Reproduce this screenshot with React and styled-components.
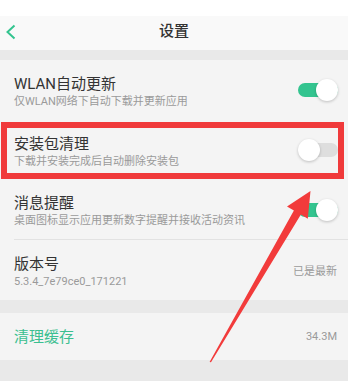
import React from "react";
import styled, { createGlobalStyle } from "styled-components";

const Global = createGlobalStyle`
  html, body { margin: 0; padding: 0; background: #e9e9e9; }
  body { font-family: Roboto, "Noto Sans CJK SC", sans-serif; }
  * { box-sizing: border-box; }
`;

const Page = styled.div`
  position: relative;
  width: 348px;
  height: 381px;
  overflow: hidden;
  background: #e9e9e9;
  display: flex;
  flex-direction: column;
`;

const StatusArea = styled.div`
  height: 16px;
  background: #ffffff;
`;

const Header = styled.div`
  height: 34px;
  background: #f9f9f9;
  display: grid;
  grid-template-columns: 40px 1fr 40px;
  align-items: center;
`;

const Back = styled.div`
  display: flex;
  align-items: center;
  padding-left: 5px;
  padding-bottom: 2px;
`;

const Title = styled.div`
  text-align: center;
  font-size: 15px;
  color: #333;
  font-weight: 500;
  line-height: 20px;
  padding-bottom: 4px;
`;

const Gap = styled.div`
  height: ${(p) => p.$h}px;
  background: #e9e9e9;
`;

const Group = styled.div`
  background: #f4f4f4;
`;

const Row = styled.div`
  height: ${(p) => p.$h || 60}px;
  margin-left: 14px;
  padding-right: 11px;
  display: flex;
  align-items: center;
  justify-content: space-between;
  border-bottom: ${(p) => (p.$divider ? "1px solid #e2e2e2" : "none")};
`;

const Texts = styled.div`
  display: flex;
  flex-direction: column;
  padding-top: ${(p) => (p.$single ? 0 : 2)}px;
`;

const RowTitle = styled.div`
  font-size: 15px;
  line-height: 20px;
  color: ${(p) => (p.$accent ? "#3bbf90" : "#333")};
`;

const RowSub = styled.div`
  font-size: 11px;
  line-height: 14px;
  color: #9a9a9a;
  margin-top: 1px;
`;

const Value = styled.div`
  font-size: 11px;
  color: #9a9a9a;
`;

const Switch = styled.div`
  position: relative;
  width: 40px;
  height: 22px;
  margin-right: -1px;
`;

const Track = styled.div`
  position: absolute;
  left: 0;
  right: 0;
  top: 4px;
  height: 14px;
  border-radius: 7px;
  background: ${(p) => (p.$on ? "#33c48f" : "#dedede")};
`;

const Knob = styled.div`
  position: absolute;
  top: 0;
  left: ${(p) => (p.$on ? 18 : 0)}px;
  width: 22px;
  height: 22px;
  border-radius: 50%;
  background: #fff;
  box-shadow: 0 1px 3px rgba(0, 0, 0, 0.22);
`;

const Highlight = styled.div`
  position: absolute;
  left: 1px;
  top: 122px;
  width: 343px;
  height: 57px;
  border: 6px solid #f03a3b;
  pointer-events: none;
`;

const ArrowLayer = styled.svg`
  position: absolute;
  left: 0;
  top: 0;
  pointer-events: none;
`;

function Toggle({ on }) {
  return (
    <Switch>
      <Track $on={on} />
      <Knob $on={on} />
    </Switch>
  );
}

export default function App() {
  return (
    <>
      <Global />
      <Page>
        <StatusArea />
        <Header>
          <Back>
            <svg width="12" height="16" viewBox="0 0 12 16">
              <path d="M9.5 1.5 L2.5 8 L9.5 14.5" fill="none" stroke="#33c48f" strokeWidth="2" />
            </svg>
          </Back>
          <Title>设置</Title>
          <div />
        </Header>
        <Gap $h={10} />
        <Group>
          <Row>
            <Texts>
              <RowTitle>WLAN自动更新</RowTitle>
              <RowSub>仅WLAN网络下自动下载并更新应用</RowSub>
            </Texts>
            <Toggle on />
          </Row>
          <Row>
            <Texts>
              <RowTitle>安装包清理</RowTitle>
              <RowSub>下载并安装完成后自动删除安装包</RowSub>
            </Texts>
            <Toggle on={false} />
          </Row>
          <Row $divider>
            <Texts>
              <RowTitle>消息提醒</RowTitle>
              <RowSub>桌面图标显示应用更新数字提醒并接收活动资讯</RowSub>
            </Texts>
            <Toggle on />
          </Row>
          <Row>
            <Texts>
              <RowTitle>版本号</RowTitle>
              <RowSub>5.3.4_7e79ce0_171221</RowSub>
            </Texts>
            <Value>已是最新</Value>
          </Row>
        </Group>
        <Gap $h={13} />
        <Group>
          <Row $h={47}>
            <Texts $single>
              <RowTitle $accent>清理缓存</RowTitle>
            </Texts>
            <Value>34.3M</Value>
          </Row>
        </Group>
        <Highlight />
        <ArrowLayer width="348" height="381" viewBox="0 0 348 381">
          <polygon
            points="310.5,191 287,206.5 293.9,210.6 209.6,362 211,362.3 300.9,214.6 307.8,218.7"
            fill="#f23b3b"
          />
        </ArrowLayer>
      </Page>
    </>
  );
}
